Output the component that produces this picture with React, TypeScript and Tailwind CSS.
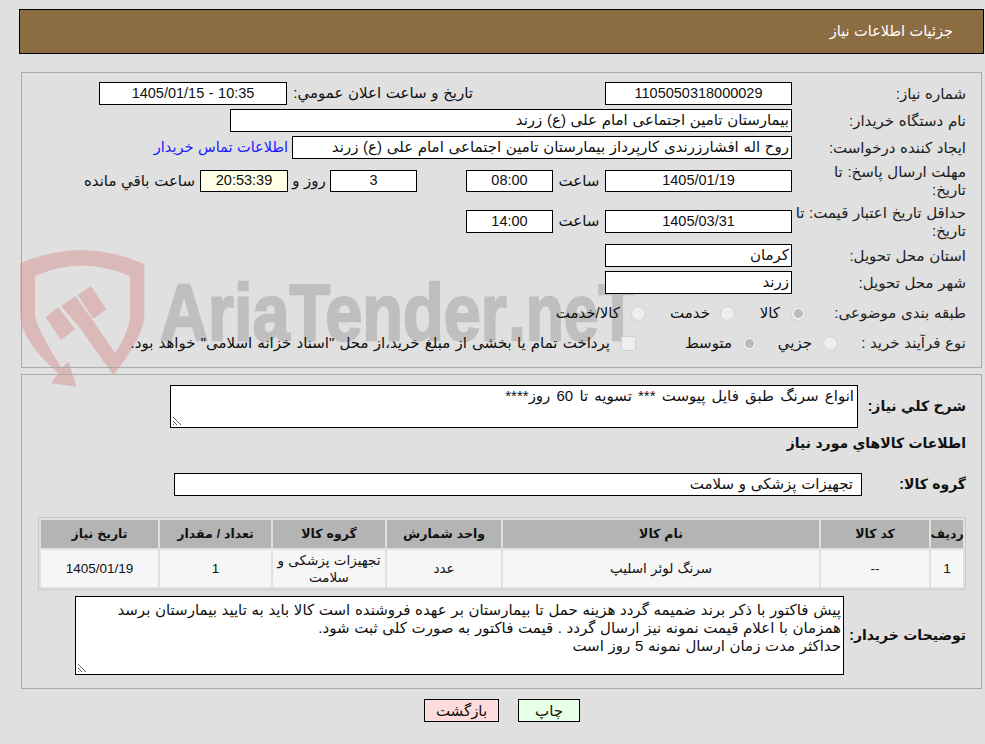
const NUM = 'justify-center text-[14.5px]';

interface BoxProps {
  className?: string;
  h?: string;
  bg?: string;
  children?: React.ReactNode;
}

function Box({ className = '', h = 'h-[23px]', bg = 'bg-white', children }: BoxProps) {
  return (
    <div className={`flex shrink-0 items-center overflow-hidden whitespace-nowrap border border-black px-[2px] ${h} ${bg} ${className}`}>
      {children}
    </div>
  );
}

function Label({ w = 'w-[174px]', children }: { w?: string; children: React.ReactNode }) {
  return <div className={`shrink-0 whitespace-nowrap leading-[18px] text-[#222] ${w}`}>{children}</div>;
}

function Radio({ checked }: { checked?: boolean }) {
  return (
    <span className="flex h-[15px] w-[15px] shrink-0 items-center justify-center rounded-full border border-[#d0d0d0] bg-[#eee]">
      {checked && <span className="h-[9px] w-[9px] rounded-full bg-[#bbb]" />}
    </span>
  );
}

function Grip() {
  return (
    <svg className="absolute bottom-[1px] left-[1px] h-[10px] w-[10px]" viewBox="0 0 10 10">
      <path d="M1 1l8 8M1 5l4 4M1 8l1 1" stroke="#666" strokeWidth="1" fill="none" />
    </svg>
  );
}

// logo behind the form, coordinates are 3x the page
function Watermark() {
  return (
    <svg className="pointer-events-none absolute left-[15px] top-[240px] h-[160px] w-[620px] [direction:ltr]" viewBox="0 0 1860 480">
      <path
        d="M15 70Q200 -10 388 72V230Q385 290 295 405L210 285L222 225L300 340Q345 270 345 225V108Q200 45 60 108V225Q62 260 140 385L160 365L185 440L108 430L130 400Q15 300 15 220Z"
        fill="#dcb9b9"
      />
      <path d="M92 232L130 202L180 268L138 300Z M188 165L228 138L274 208L235 237Z M138 198L182 168L300 340L270 370L200 270Z" fill="#dcb9b9" />
      <text x="435" y="300" direction="ltr" fontFamily="Liberation Sans" fontWeight="700" fontSize="240" textLength="1040" lengthAdjust="spacingAndGlyphs" fill="#bfbfbf" stroke="#bfbfbf" strokeWidth="7">AriaTender</text>
      <text x="1480" y="300" direction="ltr" fontFamily="Liberation Sans" fontWeight="700" fontSize="240" textLength="385" lengthAdjust="spacingAndGlyphs" fill="#bfbfbf" stroke="#bfbfbf" strokeWidth="7">.neT</text>
    </svg>
  );
}

const COLS = [
  { title: 'ردیف', w: 'w-[32px]', value: '1' },
  { title: 'کد کالا', w: 'w-[108px]', value: '--' },
  { title: 'نام کالا', w: 'w-[316px]', value: 'سرنگ لوئر اسلیپ' },
  { title: 'واحد شمارش', w: 'w-[114px]', value: 'عدد' },
  { title: 'گروه کالا', w: 'w-[112px]', value: 'تجهیزات پزشکی و سلامت' },
  { title: 'تعداد / مقدار', w: 'w-[111px]', value: '1' },
  { title: 'تاریخ نیاز', w: 'w-[117px]', value: '1405/01/19' },
];

export default function App() {
  return (
    <div dir="rtl" className="relative h-[744px] w-[985px] overflow-hidden bg-[#e0e0e0] font-['Liberation_Sans','DejaVu_Sans',sans-serif] text-[15px] text-[#111] [word-spacing:0.5px]">
      <div className="ml-[19px] mr-[1px] mt-[9px] flex h-[45px] items-center border border-black bg-[#8c6d42] pr-[30px] text-[14.5px] text-white">
        جزئیات اطلاعات نیاز
      </div>

      <Watermark />

      <div className="relative ml-[21px] mr-[3px] mt-[18px] h-[296px] border border-[#aaa] pr-[15px] pt-[9px]">
        <div className="flex h-[23px] items-center">
          <Label>شماره نیاز:</Label>
          <Box className={`w-[187px] ${NUM}`}>1105050318000029</Box>
          <div className="mr-[132px] w-[180px] shrink-0 whitespace-nowrap">تاریخ و ساعت اعلان عمومي:</div>
          <Box className={`mr-[6px] w-[188px] ${NUM}`}>10:35 - 1405/01/15</Box>
        </div>
        <div className="mt-[4px] flex h-[23px] items-center">
          <Label>نام دستگاه خریدار:</Label>
          <Box className="w-[562px]">بیمارستان تامین اجتماعی امام علی (ع) زرند</Box>
        </div>
        <div className="mt-[4px] flex h-[23px] items-center">
          <Label>ایجاد کننده درخواست:</Label>
          <Box className="w-[500px]">روح اله افشارزرندی کارپرداز بیمارستان تامین اجتماعی امام علی (ع) زرند</Box>
          <span className="mr-[4px] whitespace-nowrap text-[14.5px] text-[#1a1aff]">اطلاعات تماس خریدار</span>
        </div>
        <div className="mt-[11px] flex h-[22px] items-center">
          <Label>مهلت ارسال پاسخ: تا<br />تاریخ:</Label>
          <Box h="h-[22px]" className={`w-[187px] ${NUM}`}>1405/01/19</Box>
          <span className="w-[52px] shrink-0 text-center">ساعت</span>
          <Box h="h-[22px]" className={`w-[87px] ${NUM}`}>08:00</Box>
          <span className="w-[49px] shrink-0" />
          <Box h="h-[22px]" className={`w-[87px] ${NUM}`}>3</Box>
          <span className="w-[42px] shrink-0 text-center">روز و</span>
          <Box h="h-[22px]" bg="bg-[#ffffe8]" className={`w-[88px] ${NUM}`}>20:53:39</Box>
          <span className="mr-[5px] whitespace-nowrap">ساعت باقي مانده</span>
        </div>
        <div className="mt-[18px] flex h-[23px] items-center">
          <Label>حداقل تاریخ اعتبار قیمت: تا<br />تاریخ:</Label>
          <Box className={`w-[187px] ${NUM}`}>1405/03/31</Box>
          <span className="w-[52px] shrink-0 text-center">ساعت</span>
          <Box className={`w-[87px] ${NUM}`}>14:00</Box>
        </div>
        <div className="mt-[11px] flex h-[23px] items-center">
          <Label>استان محل تحویل:</Label>
          <Box className="w-[187px]">کرمان</Box>
        </div>
        <div className="mt-[4px] flex h-[23px] items-center">
          <Label>شهر محل تحویل:</Label>
          <Box className="w-[187px]">زرند</Box>
        </div>
        <div className="mt-[8px] flex h-[22px] items-center whitespace-nowrap">
          <Label w="w-[160px]">طبقه بندی موضوعی:</Label>
          <Radio checked />
          <span className="mr-[11px] w-[20px]">کالا</span>
          <span className="mr-[25px]"><Radio /></span>
          <span className="mr-[10px] w-[40px]">خدمت</span>
          <span className="mr-[24px]"><Radio /></span>
          <span className="mr-[11px]">کالا/خدمت</span>
        </div>
        <div className="mt-[8px] flex h-[22px] items-center whitespace-nowrap">
          <Label w="w-[128px]">نوع فرآیند خرید :</Label>
          <Radio />
          <span className="mr-[11px] w-[35px]">جزیي</span>
          <span className="mr-[20px]"><Radio checked /></span>
          <span className="mr-[10px] w-[45px]">متوسط</span>
          <span className="mr-[51px] h-[15px] w-[15px] shrink-0 rounded-[2px] border border-[#d0d0d0] bg-[#eee]" />
          <span className="mr-[11px] [word-spacing:1px]">پرداخت تمام یا بخشی از مبلغ خرید،از محل "اسناد خزانه اسلامی" خواهد بود.</span>
        </div>
      </div>

      <div className="relative ml-[21px] mr-[3px] mt-[6px] h-[315px] border border-[#aaa] pr-[15px] pt-[10px]">
        <div className="flex items-start">
          <div className="w-[108px] shrink-0 whitespace-nowrap pt-[12px] text-[14px] font-bold leading-[18px]">شرح کلي نیاز:</div>
          <div className="relative h-[43px] w-[688px] border border-black bg-white px-[3px] pt-[1px] leading-[18px] [word-spacing:2px]">
            انواع سرنگ طبق فایل پیوست *** تسویه تا 60 روز****
            <Grip />
          </div>
        </div>
        <div className="mt-[6px] h-[18px] text-[14px] font-bold leading-[18px]">اطلاعات کالاهاي مورد نیاز</div>
        <div className="mt-[21px] flex items-center">
          <div className="w-[104px] shrink-0 text-[14px] font-bold">گروه کالا:</div>
          <Box className="w-[688px] pr-[8px]">تجهیزات پزشکی و سلامت</Box>
        </div>
        <div className="mt-[21px] w-[928px] border border-[#c8c8c8] p-[2px] text-[12.5px]">
          <div className="flex gap-[2px]">
            {COLS.map((c) => (
              <div key={c.title} className={`flex h-[28px] items-center justify-center whitespace-nowrap bg-[#b4b4b4] font-bold ${c.w}`}>
                {c.title}
              </div>
            ))}
          </div>
          <div className="mt-[2px] flex gap-[2px]">
            {COLS.map((c) => (
              <div key={c.title} className={`flex h-[37px] items-center justify-center bg-[#f6f6f6] px-[3px] text-center text-[13.5px] leading-[17px] ${c.w}`}>
                {c.value}
              </div>
            ))}
          </div>
        </div>
        <div className="mt-[6px] flex items-center">
          <div className="w-[122px] shrink-0 whitespace-nowrap text-[14px] font-bold">توضیحات خریدار:</div>
          <div className="relative h-[79px] w-[769px] border border-black bg-white px-[2px] pt-[4px] leading-[18px]">
            پیش فاکتور با ذکر برند ضمیمه گردد هزینه حمل تا بیمارستان بر عهده فروشنده است کالا باید به تایید بیمارستان برسد
            <br />
            همزمان با اعلام قیمت نمونه نیز ارسال گردد . قیمت فاکتور به صورت کلی ثبت شود.
            <br />
            حداکثر مدت زمان ارسال نمونه 5 روز است
            <Grip />
          </div>
        </div>
      </div>

      <div className="mt-[10px] flex justify-center gap-[19px] pl-[19px]">
        <button className="h-[23px] w-[62px] border border-black bg-[#e8ffe8]">چاپ</button>
        <button className="h-[23px] w-[75px] border border-black bg-[#ffdcdc]">بازگشت</button>
      </div>
    </div>
  );
}
